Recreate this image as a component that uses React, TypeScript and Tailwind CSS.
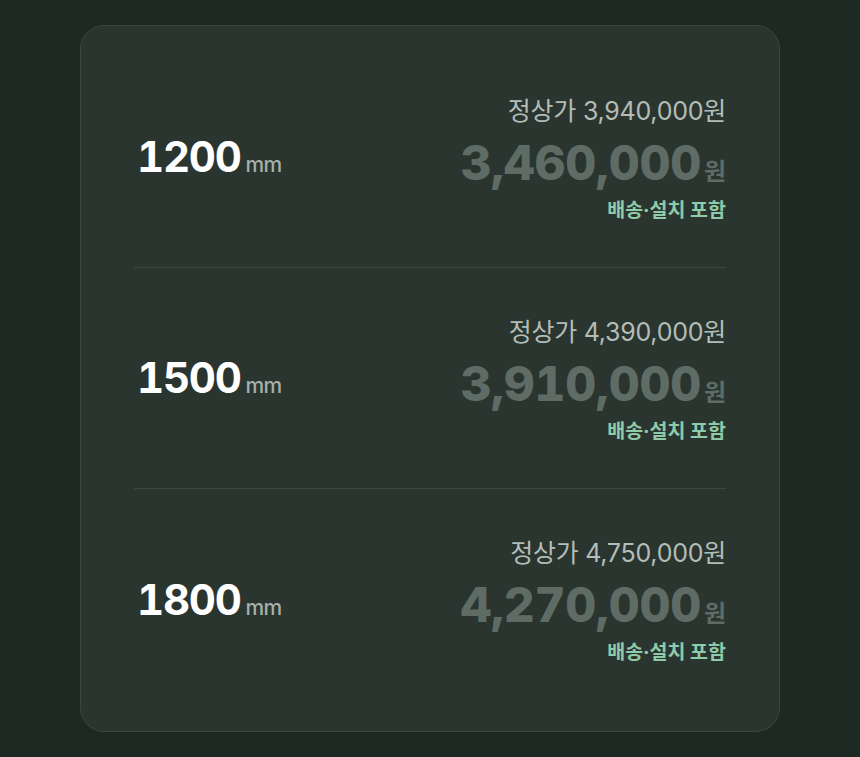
import React from "react";

const rows = [
  { size: "1200", regular: "3,940,000", price: "3,460,000" },
  { size: "1500", regular: "4,390,000", price: "3,910,000" },
  { size: "1800", regular: "4,750,000", price: "4,270,000" },
];

export default function App() {
  return (
    <div
      className="min-h-[757px] w-full bg-[#1d2a24] pt-[25px]"
      style={{ fontFamily: 'Inter, "Noto Sans CJK KR", sans-serif' }}
    >
      <div className="mx-auto w-[700px] rounded-[24px] border border-[#3a4640] bg-[#2a3530] px-[53px] py-[21px]">
        {rows.map((r, i) => (
          <div
            key={r.size}
            className={`flex h-[221px] items-center justify-between ${
              i < rows.length - 1 ? "border-b border-[#3c4741]" : ""
            }`}
          >
            <div className="flex items-baseline pl-[3px]">
              <span className="text-[42px] font-bold leading-none tracking-[-0.03em] text-white tabular-nums">
                {r.size}
              </span>
              <span className="ml-[5px] text-[21px] font-medium leading-none tracking-[-0.04em] text-[#a6b0aa]">
                mm
              </span>
            </div>
            <div className="flex flex-col items-end">
              <div className="mt-[2px] text-[25px] leading-[32px] tracking-[-0.01em] text-[#b3bdb7]">
                정상가 {r.regular}원
              </div>
              <div className="mt-[10px] flex items-baseline">
                <span className="text-[48px] font-extrabold leading-[52px] tracking-[-0.005em] text-[#5e6c65] tabular-nums">
                  {r.price}
                </span>
                <span className="ml-[3px] text-[24px] font-bold leading-none text-[#5e6c65]">
                  원
                </span>
              </div>
              <div className="mt-[9px] text-[19.5px] font-bold leading-[24px] text-[#8fcaa9]">
                배송·설치 포함
              </div>
            </div>
          </div>
        ))}
      </div>
    </div>
  );
}
